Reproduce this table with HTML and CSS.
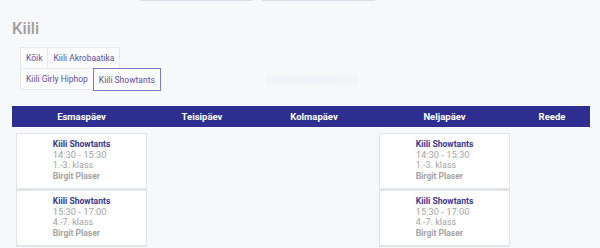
FILE: index.html
```html
<!DOCTYPE html>
<html lang="et">
<head>
    <meta charset="UTF-8">
    <meta name="viewport" content="width=device-width, initial-scale=1.0">
    <title>Kiili tunniplaan</title>

    <link rel="stylesheet" href="styles.css">
</head>
<body>

    <div class="Search">
        <span class="Search__field"></span>
        <span class="Search__field"></span>
    </div>

    <h2 class="Title">Kiili</h2>

    <div class="Toolbar">
        <div class="Filters">
            <button class="Filters__btn">Kõik</button>
            <button class="Filters__btn">Kiili Akrobaatika</button>
            <button class="Filters__btn">Kiili Girly Hiphop</button>
            <button class="Filters__btn Filters__btn--active">Kiili Showtants</button>
        </div>
        <button class="Fullscreen">Full screen Show</button>
    </div>

    <table class="Schedule">
        <thead>
            <tr>
                <th class="Schedule__mon">Esmaspäev</th>
                <th class="Schedule__tue">Teisipäev</th>
                <th class="Schedule__wed">Kolmapäev</th>
                <th class="Schedule__thu">Neljapäev</th>
                <th class="Schedule__fri">Reede</th>
            </tr>
        </thead>
        <tbody>
            <tr>
                <td>
                    <div class="Lesson">
                        <div class="Lesson__info">
                            <div class="Lesson__name">Kiili Showtants</div>
                            <div class="Lesson__time">14:30 - 15:30</div>
                            <div class="Lesson__group">1.-3. klass</div>
                            <div class="Lesson__teacher">Birgit Plaser</div>
                        </div>
                    </div>
                    <div class="Lesson">
                        <div class="Lesson__info">
                            <div class="Lesson__name">Kiili Showtants</div>
                            <div class="Lesson__time">15:30 - 17:00</div>
                            <div class="Lesson__group">4.-7. klass</div>
                            <div class="Lesson__teacher">Birgit Plaser</div>
                        </div>
                    </div>
                </td>
                <td></td>
                <td></td>
                <td>
                    <div class="Lesson">
                        <div class="Lesson__info">
                            <div class="Lesson__name">Kiili Showtants</div>
                            <div class="Lesson__time">14:30 - 15:30</div>
                            <div class="Lesson__group">1.-3. klass</div>
                            <div class="Lesson__teacher">Birgit Plaser</div>
                        </div>
                    </div>
                    <div class="Lesson">
                        <div class="Lesson__info">
                            <div class="Lesson__name">Kiili Showtants</div>
                            <div class="Lesson__time">15:30 - 17:00</div>
                            <div class="Lesson__group">4.-7. klass</div>
                            <div class="Lesson__teacher">Birgit Plaser</div>
                        </div>
                    </div>
                </td>
                <td></td>
            </tr>
        </tbody>
    </table>

</body>
</html>
```

FILE: styles.css
```css
* {
    box-sizing: border-box;
}

body {
    margin: 0;
    padding: 0 10px 0 12px;
    background: #f7f8fa;
    font-family: 'Roboto', sans-serif;
}

/* поля поиска сверху (видна только нижняя граница) */
.Search {
    display: flex;
    gap: 9px;
    padding-left: 128px;
}

.Search__field {
    width: 113px;
    height: 1px;
    background: #d9dfe6;
}

.Title {
    margin: 20px 0 0;
    font-size: 16.5px;
    line-height: 16px;
    font-weight: 500;
    color: #a39e9a;
}

.Toolbar {
    display: flex;
    margin-top: 10px;
    padding-left: 8px;
}

.Filters {
    width: 150px;
    display: flex;
    flex-wrap: wrap;
}

.Filters__btn {
    height: 22px;
    padding: 0 5px;
    margin: 0 -1px -1px 0;
    border: 1px solid #e8e9ec;
    background: #fbfbfc;
    font-family: 'Roboto', sans-serif;
    font-size: 8.5px;
    color: #5b52a3;
}

.Filters__btn--active {
    height: 23px;
    border-color: #7d79c4;
    position: relative;
}

.Fullscreen {
    height: 10px;
    width: 92px;
    margin: 28px 0 0 96px;
    padding: 0 0 0 10px;
    border: none;
    background: #f1f4f8;
    font-family: 'Roboto', sans-serif;
    font-size: 8px;
    line-height: 10px;
    text-align: left;
    color: #eceef2;
}

.Schedule {
    width: 578px;
    margin-top: 16px;
    border-collapse: collapse;
}

.Schedule th {
    height: 21px;
    padding: 0;
    background: #2e2e90;
    color: #fff;
    font-size: 9.5px;
    font-weight: 700;
}

.Schedule__mon,
.Schedule__thu {
    width: 139px;
}

.Schedule__tue {
    width: 102px;
}

.Schedule__wed {
    width: 122px;
}

.Schedule td {
    vertical-align: top;
    padding: 6px 4px 0;
}

.Lesson {
    height: 57px;
    display: flex;
    justify-content: center;
    padding-top: 5px;
    background: #fff;
    border: 1px solid #e1e4e8;
    border-bottom-width: 2px;
}

.Lesson__info {
    font-size: 9px;
    line-height: 10.5px;
    color: #a4a4a4;
}

.Lesson__name {
    color: #3b3890;
    font-weight: 700;
    font-size: 8.6px;
}

.Lesson__time {
    font-size: 9.4px;
}

.Lesson__group {
    font-size: 9px;
}

.Lesson__teacher {
    font-size: 8.5px;
    font-weight: 700;
}
```
